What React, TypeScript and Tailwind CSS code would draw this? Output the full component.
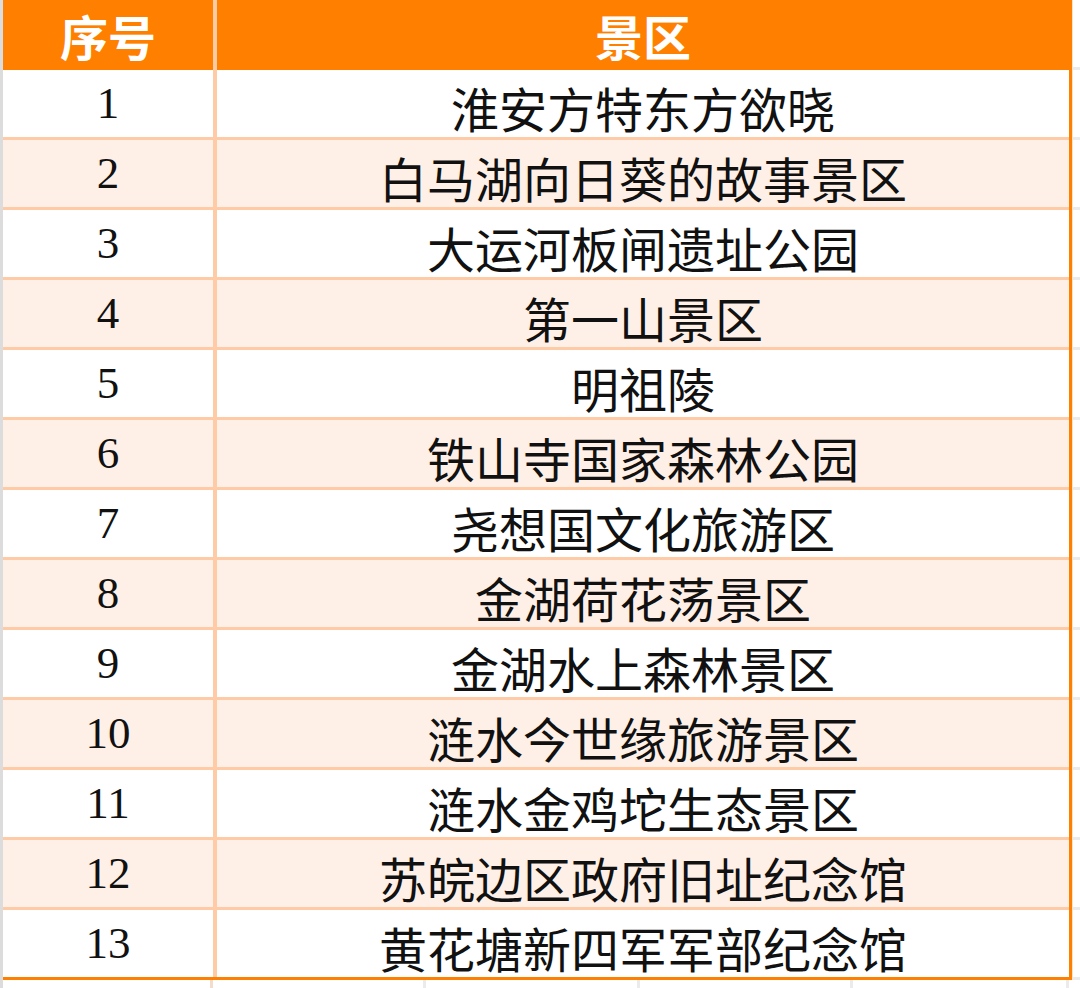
const rows = [
  "淮安方特东方欲晓",
  "白马湖向日葵的故事景区",
  "大运河板闸遗址公园",
  "第一山景区",
  "明祖陵",
  "铁山寺国家森林公园",
  "尧想国文化旅游区",
  "金湖荷花荡景区",
  "金湖水上森林景区",
  "涟水今世缘旅游景区",
  "涟水金鸡坨生态景区",
  "苏皖边区政府旧址纪念馆",
  "黄花塘新四军军部纪念馆",
];

const cjk = "font-['Noto_Sans_CJK_SC',sans-serif]";

export default function App() {
  return (
    <div className="flex h-[988px] w-[1080px] flex-col overflow-hidden bg-white">
      <div className="flex h-[980px]">
        <div className="w-[3px] bg-[#dcdcdc]" />

        <div className="flex w-[1069px] flex-col border-r-[3px] border-[#ff7f00]">
          <div className="flex h-[70px] shrink-0 bg-[#ff7f00] text-white">
            <div className={`flex w-[210px] items-center justify-center text-[48px] font-bold ${cjk}`}>
              序号
            </div>
            <div className="w-[4px] bg-[#ffcba6]" />
            <div className={`flex flex-1 items-center justify-center text-[48px] font-bold ${cjk}`}>
              景区
            </div>
          </div>

          {rows.map((name, i) => (
            <div
              key={name}
              className={`flex h-[70px] shrink-0 border-b-[3px] ${
                i === rows.length - 1 ? "border-[#ff7f00]" : "border-[#ffcba6]"
              } ${i % 2 === 1 ? "bg-[#fff0e7]" : "bg-white"} text-[#111]`}
            >
              <div className="flex w-[210px] items-center justify-center font-['Liberation_Serif',serif] text-[45px]">
                {i + 1}
              </div>
              <div className="w-[4px] bg-[#ffcba6]" />
              <div className={`flex flex-1 items-center justify-center pt-[6px] text-[48px] ${cjk}`}>
                {name}
              </div>
            </div>
          ))}
        </div>

        <div className="flex w-[8px] flex-col border-l border-[#ffe0c8]">
          {Array.from({ length: 14 }).map((_, i) => (
            <div key={i} className="h-[70px] shrink-0 border-b-[3px] border-[#ebebeb]" />
          ))}
        </div>
      </div>

      <div className="flex h-[8px]">
        <div className="w-[3px] bg-[#dcdcdc]" />
        <div className="w-[210px] border-r-[3px] border-[#f3dccb]" />
        <div className="w-[213px] border-r-[3px] border-[#ebebeb]" />
        <div className="w-[214px] border-r-[3px] border-[#ebebeb]" />
        <div className="w-[213px] border-r-[3px] border-[#ebebeb]" />
        <div className="w-[216px] border-r-[3px] border-[#ebebeb]" />
      </div>
    </div>
  );
}
